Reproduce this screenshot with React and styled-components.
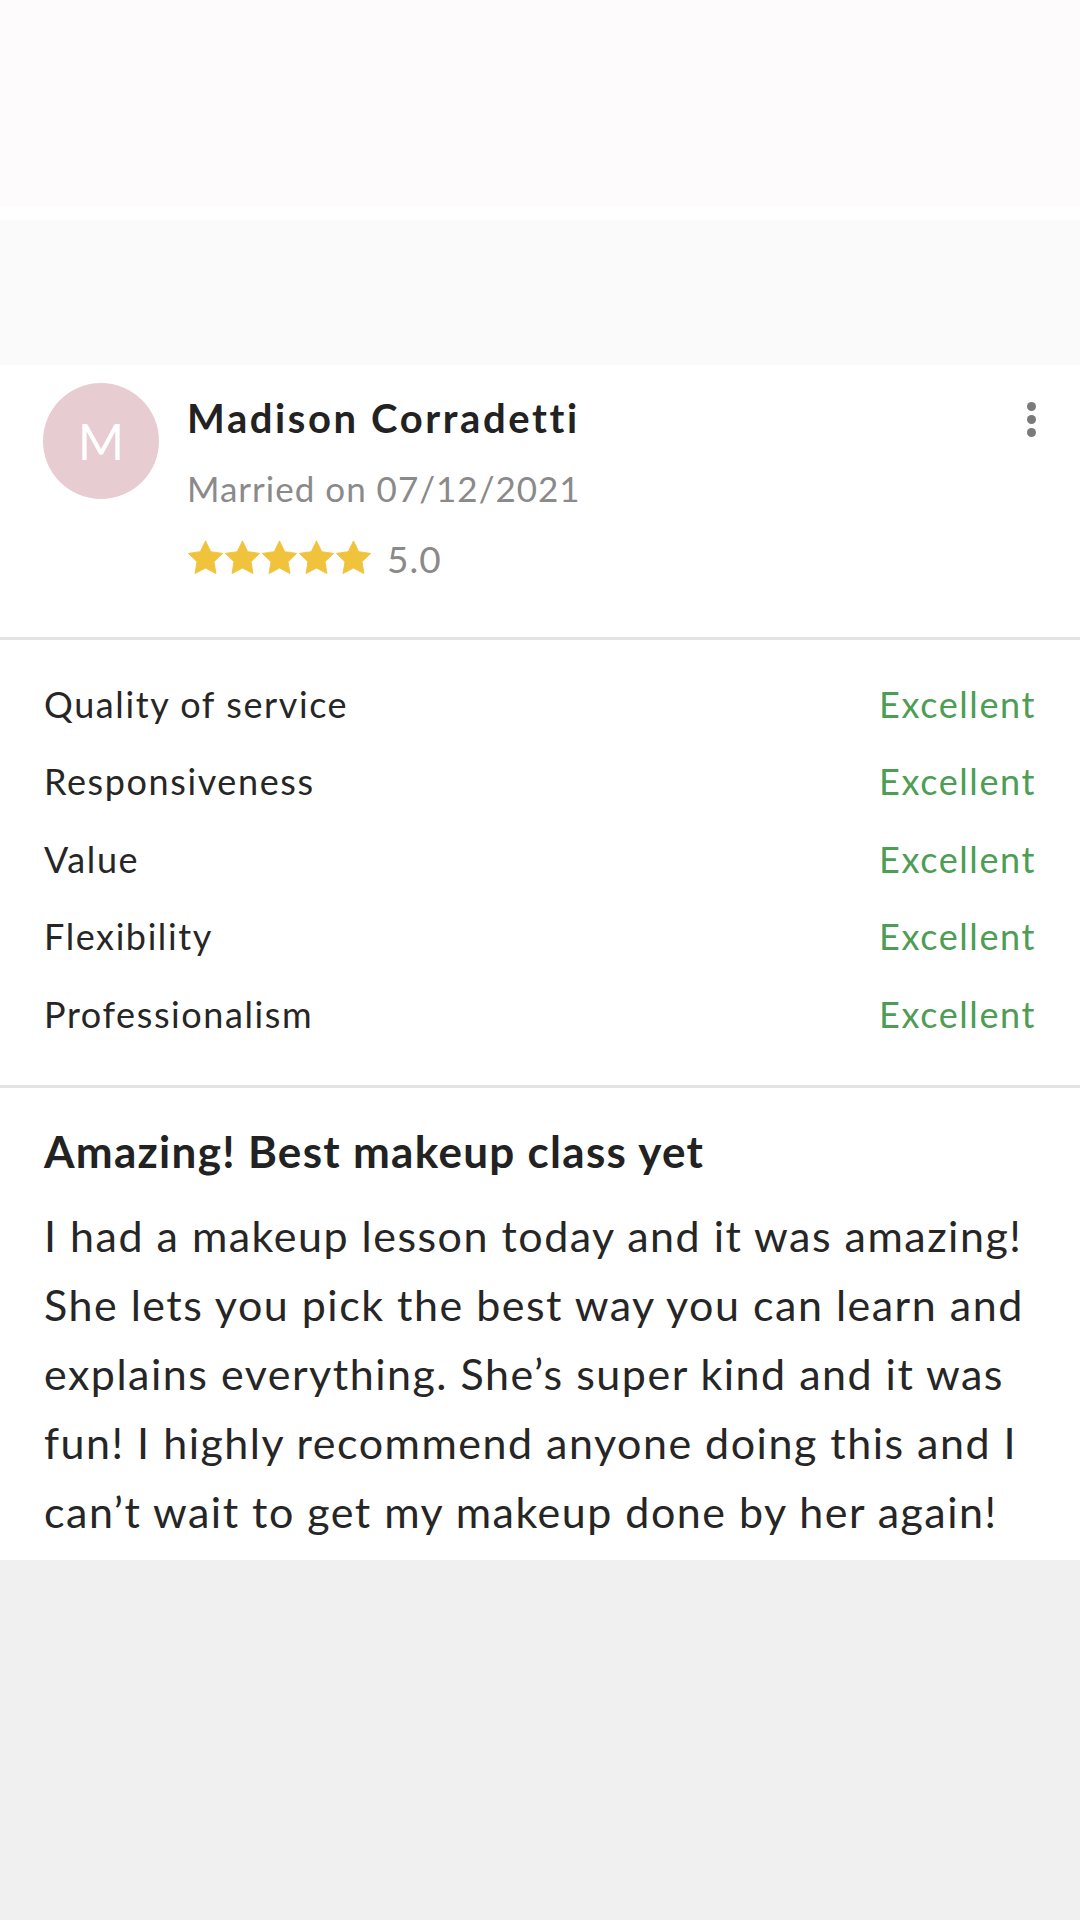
import React from "react";
import styled, { createGlobalStyle } from "styled-components";

const GlobalStyle = createGlobalStyle`
  html, body {
    margin: 0;
    padding: 0;
    background: #f0f0f0;
  }
  body {
    font-family: Lato, "Noto Sans", "Liberation Sans", sans-serif;
    -webkit-font-smoothing: antialiased;
  }
`;

const Page = styled.div`
  width: 1080px;
  min-height: 1920px;
  background: #f0f0f0;
  display: flex;
  flex-direction: column;
`;

const TopBanner = styled.div`
  height: 365px;
  background: linear-gradient(
    #fdfbfc 0 207px,
    #fefefe 207px 220px,
    #fafafa 220px 100%
  );
`;

const Card = styled.div`
  background: #ffffff;
  display: flex;
  flex-direction: column;
`;

const Header = styled.div`
  display: flex;
  align-items: flex-start;
  padding: 18px 44px 44px 43px;
`;

const Avatar = styled.div`
  width: 116px;
  height: 116px;
  border-radius: 50%;
  background: #e7cdd2;
  color: #ffffff;
  display: flex;
  align-items: center;
  justify-content: center;
  font-size: 50px;
  font-weight: 400;
  flex-shrink: 0;
`;

const Info = styled.div`
  flex: 1;
  margin-left: 28px;
  display: flex;
  flex-direction: column;
`;

const Name = styled.div`
  font-size: 40px;
  font-weight: 700;
  letter-spacing: 2.6px;
  color: #222222;
  line-height: 70px;
`;

const Married = styled.div`
  font-size: 35px;
  letter-spacing: 1px;
  color: #8a8a8a;
  line-height: 70px;
`;

const StarsRow = styled.div`
  display: flex;
  align-items: center;
  height: 70px;
`;

const Stars = styled.div`
  display: flex;
  gap: 0;
`;

const Score = styled.span`
  font-size: 37px;
  letter-spacing: 1px;
  color: #8a8a8a;
  margin-left: 15px;
`;

const Menu = styled.div`
  display: flex;
  flex-direction: column;
  gap: 4px;
  margin-top: 19px;
`;

const Dot = styled.span`
  width: 9px;
  height: 9px;
  border-radius: 50%;
  background: #7a7a7a;
`;

const Divider = styled.div`
  height: 3px;
  background: #e3e3e3;
`;

const Ratings = styled.div`
  display: flex;
  flex-direction: column;
  padding: 25px 44px 32px 44px;
`;

const RatingRow = styled.div`
  display: flex;
  justify-content: space-between;
  align-items: center;
  height: 77.5px;
  font-size: 36px;
  letter-spacing: 1.6px;
`;

const Label = styled.span`
  color: #262626;
`;

const Grade = styled.span`
  color: #4d9d54;
`;

const Review = styled.div`
  padding: 33px 44px 14px 44px;
`;

const Title = styled.div`
  font-size: 44px;
  font-weight: 700;
  letter-spacing: 1.3px;
  color: #222222;
  line-height: 60px;
  margin-bottom: 20px;
`;

const Body = styled.p`
  margin: 0;
  font-size: 43px;
  letter-spacing: 1.5px;
  line-height: 69px;
  color: #262626;
  white-space: nowrap;
`;

const Star = () => (
  <svg width="37" height="36" viewBox="0 0 24 23">
    <path
      d="M12 0.4l3.4 7 7.7 1.1-5.6 5.4 1.3 7.7L12 18l-6.8 3.6 1.3-7.7L0.9 8.5l7.7-1.1z"
      fill="#f1c23b"
      stroke="#f1c23b"
      strokeWidth="0.6"
      strokeLinejoin="round"
    />
  </svg>
);

const ratings = [
  "Quality of service",
  "Responsiveness",
  "Value",
  "Flexibility",
  "Professionalism",
];

const reviewLines = [
  "I had a makeup lesson today and it was amazing!",
  "She lets you pick the best way you can learn and",
  "explains everything. She’s super kind and it was",
  "fun! I highly recommend anyone doing this and I",
  "can’t wait to get my makeup done by her again!",
];

const App = () => {
  return (
    <Page>
      <GlobalStyle />
      <TopBanner />
      <Card>
        <Header>
          <Avatar>M</Avatar>
          <Info>
            <Name>Madison Corradetti</Name>
            <Married>Married on 07/12/2021</Married>
            <StarsRow>
              <Stars>
                {[0, 1, 2, 3, 4].map(i => (
                  <Star key={i} />
                ))}
              </Stars>
              <Score>5.0</Score>
            </StarsRow>
          </Info>
          <Menu>
            <Dot />
            <Dot />
            <Dot />
          </Menu>
        </Header>
        <Divider />
        <Ratings>
          {ratings.map(r => (
            <RatingRow key={r}>
              <Label>{r}</Label>
              <Grade>Excellent</Grade>
            </RatingRow>
          ))}
        </Ratings>
        <Divider />
        <Review>
          <Title>Amazing! Best makeup class yet</Title>
          <Body>
            {reviewLines.map((line, i) => (
              <React.Fragment key={i}>
                {line}
                {i < reviewLines.length - 1 && <br />}
              </React.Fragment>
            ))}
          </Body>
        </Review>
      </Card>
    </Page>
  );
};

export default App;
